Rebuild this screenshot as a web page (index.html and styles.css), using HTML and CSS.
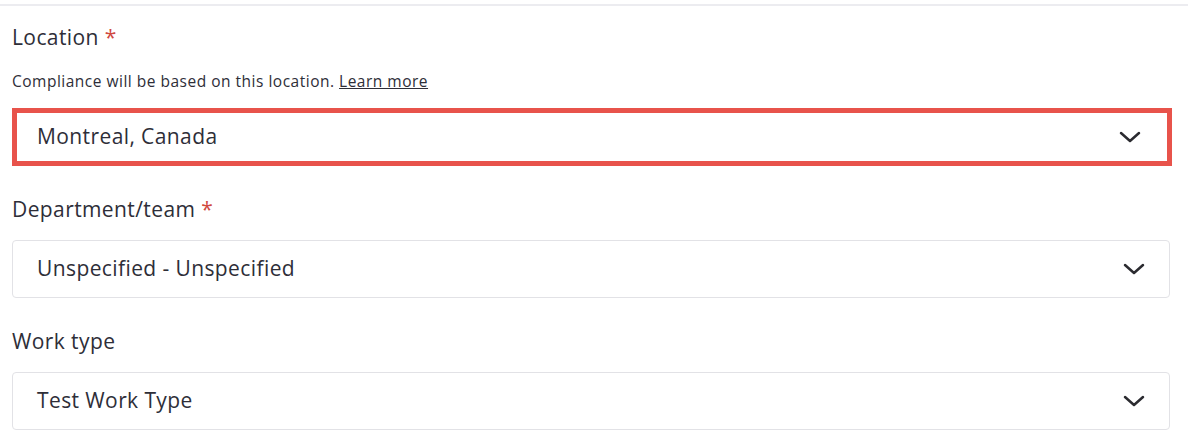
FILE: index.html
```html
<!DOCTYPE html>
<html lang="en">
<head>
  <meta charset="UTF-8" />
  <meta name="viewport" content="width=device-width, initial-scale=1.0"/>
  <title>Job details</title>
  <link rel="stylesheet" href="styles.css">
</head>
<body>

  <div class="form-panel">
    <div class="field first">
      <label class="field-label">Location <span class="required">*</span></label>
      <p class="hint">Compliance will be based on this location. <a href="#">Learn more</a></p>
      <div class="select highlighted">
        <span class="select-value">Montreal, Canada</span>
        <svg class="chevron" width="22" height="12" viewBox="0 0 22 12"><path d="M2 2 L11 10 L20 2" /></svg>
      </div>
    </div>

    <div class="field">
      <label class="field-label">Department/team <span class="required">*</span></label>
      <div class="select">
        <span class="select-value">Unspecified - Unspecified</span>
        <svg class="chevron" width="22" height="12" viewBox="0 0 22 12"><path d="M2 2 L11 10 L20 2" /></svg>
      </div>
    </div>

    <div class="field">
      <label class="field-label">Work type</label>
      <div class="select">
        <span class="select-value">Test Work Type</span>
        <svg class="chevron" width="22" height="12" viewBox="0 0 22 12"><path d="M2 2 L11 10 L20 2" /></svg>
      </div>
    </div>
  </div>

</body>
</html>
```

FILE: styles.css
```css
* { margin: 0; padding: 0; box-sizing: border-box; }

html, body {
  height: 100%;
  overflow: hidden;
}

body {
  font-family: 'Open Sans', 'Noto Sans', sans-serif;
  background: #fff;
  color: #2e2e38;
  padding-top: 4px;
}

.form-panel {
  border-top: 2px solid #ececf0;
  padding: 0 18px 0 12px;
}

.field {
  display: flex;
  flex-direction: column;
  margin-top: 29px;
}

.field.first {
  margin-top: 17px;
}

.field-label {
  font-size: 21px;
  line-height: 28px;
  letter-spacing: 0.4px;
  margin-bottom: 17px;
}

.field.first .field-label {
  margin-bottom: 20px;
}

.required {
  color: #d0493f;
}

.hint {
  font-size: 15.5px;
  line-height: 20px;
  letter-spacing: 0.5px;
  margin-bottom: 17px;
}

.hint a {
  color: #2e2e38;
  text-decoration: underline;
}

.select {
  display: flex;
  align-items: center;
  justify-content: space-between;
  height: 58px;
  padding: 0 24px;
  border: 1px solid #e2e2e6;
  border-radius: 4px;
  font-size: 21px;
  line-height: 28px;
  letter-spacing: 0.4px;
}

.select.highlighted {
  border: 5px solid #e8534b;
  border-radius: 0;
  padding: 0 26px 0 20px;
  margin-right: -2px;
}

.select-value {
  margin-top: -2px;
}

.chevron path {
  fill: none;
  stroke: #2b2b30;
  stroke-width: 2.5;
  stroke-linecap: round;
  stroke-linejoin: round;
}
```
